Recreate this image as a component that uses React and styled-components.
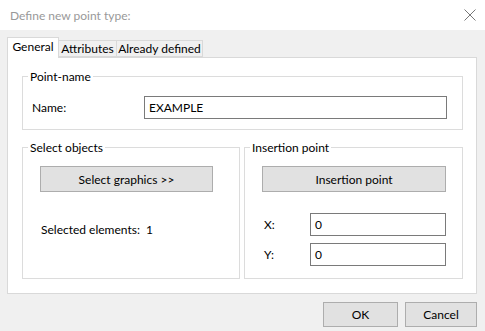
import React from "react";
import styled, { createGlobalStyle } from "styled-components";

const Global = createGlobalStyle`
  html, body { margin: 0; padding: 0; }
  body { font-family: Lato, "Liberation Sans", Arial, sans-serif; font-size: 12px; color: #000; }
  * { box-sizing: border-box; }
`;

const Window = styled.div`
  width: 485px;
  height: 331px;
  background: #f0f0f0;
  display: flex;
  flex-direction: column;
  overflow: hidden;
`;

const TitleBar = styled.div`
  height: 30px;
  background: #fff;
  display: flex;
  align-items: center;
  justify-content: space-between;
  padding: 0 9px 0 10px;
  color: #999;
  font-size: 12px;
`;

const CloseIcon = styled.svg`
  width: 12px;
  height: 12px;
  display: block;
`;

const Body = styled.div`
  padding: 7px 8px 0 7px;
  display: flex;
  flex-direction: column;
`;

const TabRow = styled.div`
  height: 20px;
  display: flex;
  align-items: flex-end;
  position: relative;
  z-index: 1;
`;

const Tab = styled.div`
  height: ${(p) => (p.$active ? "21px" : "17px")};
  margin-bottom: ${(p) => (p.$active ? "-1px" : "0")};
  width: ${(p) => p.$w}px;
  background: ${(p) => (p.$active ? "#fff" : "#f0f0f0")};
  border: 1px solid #d9d9d9;
  border-bottom: ${(p) => (p.$active ? "none" : "1px solid #d9d9d9")};
  border-left: ${(p) => (p.$first || p.$active ? "1px solid #d9d9d9" : "none")};
  display: flex;
  align-items: center;
  justify-content: center;
  padding-bottom: ${(p) => (p.$active ? "3px" : "0")};
  white-space: nowrap;
`;

const Panel = styled.div`
  width: 470px;
  height: 237px;
  background: #fff;
  border: 1px solid #d9d9d9;
  padding: 11px 13px 14px 14px;
  display: flex;
  flex-direction: column;
  gap: 10px;
`;

const Group = styled.fieldset`
  margin: 0;
  border: 1px solid #dcdcdc;
  padding: 0 0 ${(p) => p.$pb}px 0;
  min-width: 0;
  width: ${(p) => (p.$w ? `${p.$w}px` : "auto")};
  display: flex;
  flex-direction: column;
  align-items: flex-start;
`;

const Legend = styled.legend`
  margin-left: 5px;
  padding: 0 2px;
  line-height: 15px;
  height: 15px;
`;

const Row = styled.div`
  display: flex;
  align-items: center;
  padding-left: ${(p) => p.$pl}px;
  margin-top: ${(p) => p.$mt || 0}px;
`;

const Label = styled.span`
  width: ${(p) => p.$w}px;
  flex: none;
`;

const Input = styled.div`
  width: ${(p) => p.$w}px;
  height: 23px;
  border: 1px solid #7a7a7a;
  background: #fff;
  padding: 0 0 0 4px;
  display: flex;
  align-items: center;
  line-height: 15px;
`;

const Button = styled.div`
  width: ${(p) => p.$w}px;
  height: ${(p) => p.$h}px;
  background: #e1e1e1;
  border: 1px solid #adadad;
  display: flex;
  align-items: center;
  justify-content: center;
  margin-left: ${(p) => p.$ml || 0}px;
  margin-top: ${(p) => p.$mt || 0}px;
`;

const GroupRow = styled.div`
  display: flex;
  gap: 4px;
  flex: 1;
  min-height: 0;
`;

const Footer = styled.div`
  display: flex;
  justify-content: flex-end;
  gap: 7px;
  padding: 8px 0 0 0;
`;

export default function App() {
  return (
    <>
      <Global />
      <Window>
        <TitleBar>
          <span>Define new point type:</span>
          <CloseIcon viewBox="0 0 12 12">
            <path d="M0.5 0.5 L11.5 11.5 M11.5 0.5 L0.5 11.5" stroke="#777" strokeWidth="1" fill="none" />
          </CloseIcon>
        </TitleBar>
        <Body>
          <TabRow>
            <Tab $active $first $w={52}>General</Tab>
            <Tab $w={58}>Attributes</Tab>
            <Tab $w={86}>Already defined</Tab>
          </TabRow>
          <Panel>
            <Group $pb={10}>
              <Legend>Point-name</Legend>
              <Row $pl={9} $mt={12}>
                <Label $w={112}>Name:</Label>
                <Input $w={303}>EXAMPLE</Input>
              </Row>
            </Group>
            <GroupRow>
              <Group $w={218} $pb={0}>
                <Legend>Select objects</Legend>
                <Button $w={173} $h={26} $ml={17} $mt={11}>Select graphics &gt;&gt;</Button>
                <Row $pl={18} $mt={30}>Selected elements:&nbsp;&nbsp;1</Row>
              </Group>
              <Group $w={219} $pb={12}>
                <Legend>Insertion point</Legend>
                <Button $w={184} $h={26} $ml={17} $mt={11}>Insertion point</Button>
                <Row $pl={19} $mt={21}>
                  <Label $w={46}>X:</Label>
                  <Input $w={136}>0</Input>
                </Row>
                <Row $pl={19} $mt={7}>
                  <Label $w={46}>Y:</Label>
                  <Input $w={136}>0</Input>
                </Row>
              </Group>
            </GroupRow>
          </Panel>
          <Footer>
            <Button $w={75} $h={25}>OK</Button>
            <Button $w={72} $h={25}>Cancel</Button>
          </Footer>
        </Body>
      </Window>
    </>
  );
}
